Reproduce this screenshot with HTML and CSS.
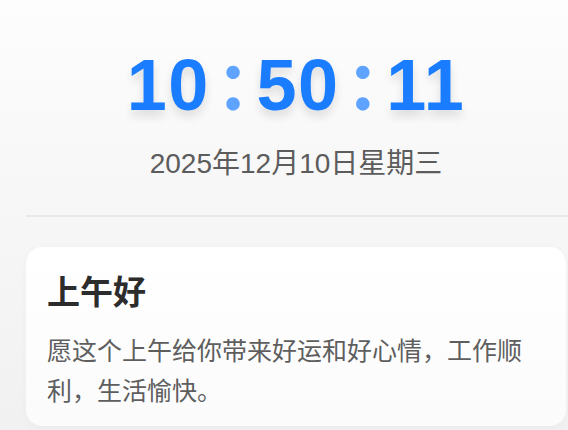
FILE: index.html
```html
<!DOCTYPE html>
<html lang="zh-CN">
<head>
<meta charset="utf-8">
<title>时钟</title>
<link rel="stylesheet" href="styles.css">
</head>
<body>
<div class="page">
  <section class="clock">
    <div class="time">
      <span class="num">10</span><span class="colon">:</span><span class="num">50</span><span class="colon">:</span><span class="num">11</span>
    </div>
    <div class="date">2025年12月10日星期三</div>
  </section>
  <div class="divider"></div>
  <section class="card">
    <h2 class="greet">上午好</h2>
    <p class="msg">愿这个上午给你带来好运和好心情，工作顺利，生活愉快。</p>
  </section>
</div>
</body>
</html>
```

FILE: styles.css
```css
html, body {
  margin: 0;
  padding: 0;
}
body {
  width: 568px;
  height: 430px;
  overflow: hidden;
  background: linear-gradient(180deg, #fdfdfd 0%, #f7f7f7 45%, #f1f1f1 100%);
  font-family: "Liberation Sans", "Noto Sans CJK SC", sans-serif;
}
.page {
  width: 540px;
  padding: 0 0 0 26px;
  display: flex;
  flex-direction: column;
}
.clock {
  display: flex;
  flex-direction: column;
  align-items: center;
  padding-top: 40px;
}
.time {
  display: flex;
  align-items: baseline;
  height: 92px;
  font-family: "Liberation Sans", "Noto Sans", sans-serif;
  font-weight: 700;
  font-size: 72px;
  line-height: 90px;
  color: #1a7cff;
}
.num {
  letter-spacing: 1.5px;
  text-shadow: 0 6px 10px rgba(0, 0, 0, 0.12);
}
.colon {
  font-family: "Lato", "Liberation Sans", sans-serif;
  font-weight: 700;
  font-size: 88px;
  line-height: 0;
  color: #5ea3ff;
  margin: 0 12px 0 12px;
}
.date {
  margin-top: 15px;
  font-family: "Liberation Sans", "Noto Sans CJK SC", sans-serif;
  font-size: 28px;
  line-height: 34px;
  color: #5c5c5c;
}
.divider {
  margin-top: 34px;
  height: 2px;
  background: #e9e9e9;
  width: 560px;
}
.card {
  margin-top: 30px;
  background: linear-gradient(180deg, #ffffff 0%, #fbfbfb 100%);
  border-radius: 16px;
  padding: 22px 24px 17px 21px;
  box-shadow: 0 2px 8px rgba(0, 0, 0, 0.03);
}
.greet {
  margin: 0;
  font-family: "Noto Sans CJK SC", sans-serif;
  font-size: 33px;
  line-height: 42px;
  font-weight: 700;
  color: #2c2c2c;
}
.msg {
  margin: 18px 0 0;
  font-family: "Noto Sans CJK SC", sans-serif;
  font-size: 25px;
  line-height: 40px;
  color: #5e5e5e;
}
```
